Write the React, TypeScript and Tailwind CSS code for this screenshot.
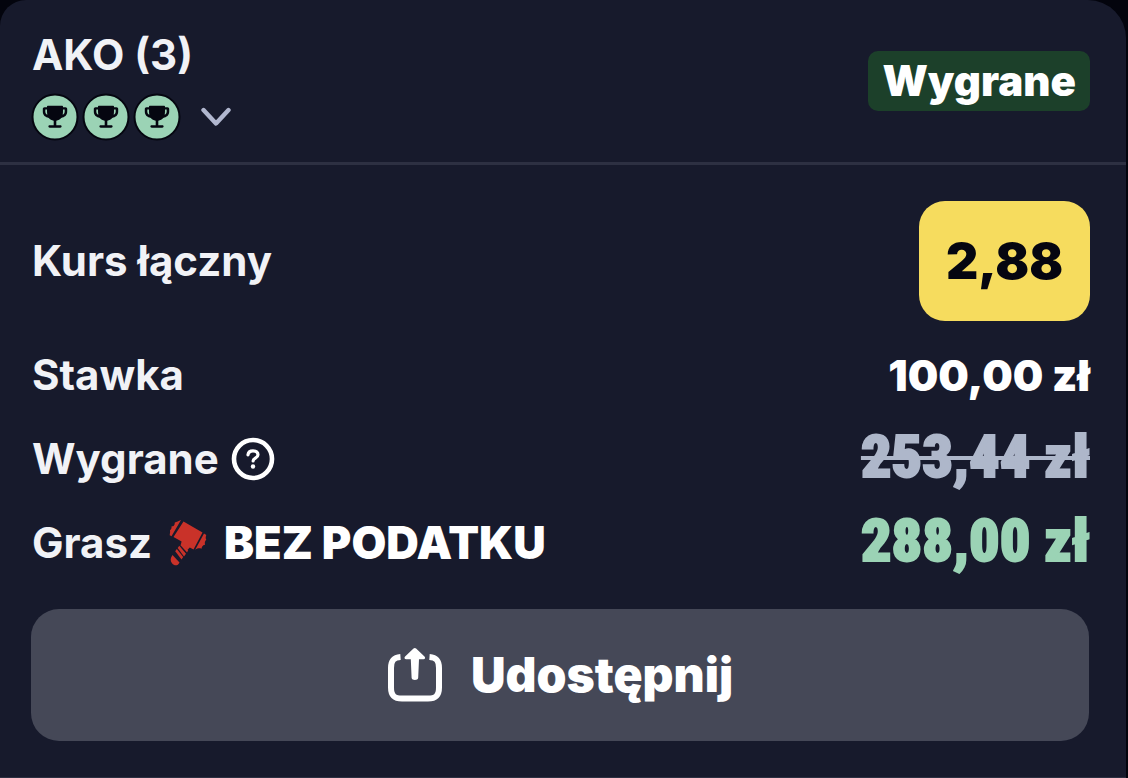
import type { ReactNode } from "react";

type RowProps = {
  label: ReactNode;
  children: ReactNode;
};

const legs = ["leg-1", "leg-2", "leg-3"];

const TrophyIcon = () => (
  <svg viewBox="0 0 48 48" className="size-12" aria-hidden="true">
    <circle cx="24" cy="24" r="22.5" fill="#9bd3b5" stroke="#050610" strokeWidth="2" />
    <path
      d="M16 13.5c0-.5.5-.8 1-.8h14c.5 0 1 .3 1 .8v.8h2.5c1 0 1.7.7 1.7 1.7v2.5c0 4-2.6 5.5-6 6.5-1.2 1.4-2.8 2.2-4.9 2.7v4.6h4c.8 0 1.3.5 1.3 1.2s-.5 1.2-1.3 1.2H18.700c-.8 0-1.3-.5-1.3-1.2s.5-1.2 1.3-1.2h4v-4.6c-2.1-.5-3.7-1.3-4.9-2.7-3.4-1-6-2.5-6-6.5V16c0-1 .7-1.7 1.7-1.7H16v-.8Zm0 3h-1.7v2c0 1.6.7 2.6 2 3.3-.3-1.500-.3-3.400-.3-5.300Zm16 0c0 1.900 0 3.800-.3 5.300 1.300-.7 2-1.700 2-3.300v-2H32Z"
      fill="#050610"
      fillRule="evenodd"
    />
  </svg>
);

const ChevronIcon = () => (
  <svg viewBox="0 0 30 20" className="h-5 w-[30px]" aria-hidden="true">
    <path
      d="M2.5 3 15 16.5 27.5 3"
      fill="none"
      stroke="#b1b7cf"
      strokeWidth="4.4"
      strokeLinecap="round"
      strokeLinejoin="round"
    />
  </svg>
);

const HelpIcon = () => (
  <svg viewBox="0 0 44 44" className="size-11" fill="none" aria-hidden="true">
    <circle cx="22" cy="22" r="19" stroke="#fff" strokeWidth="4.6" />
    <path
      d="M17 17.8c.3-2.6 2.3-4 5-4 2.9 0 5 1.5 5 3.9 0 3.5-4.9 3.4-4.9 6.3"
      stroke="#fff"
      strokeWidth="3.2"
      strokeLinecap="round"
    />
    <circle cx="22" cy="29.5" r="2.2" fill="#fff" />
  </svg>
);

const HammerIcon = () => (
  <svg viewBox="0 0 40 48" className="mx-1 h-12 w-10" fill="#c93229" aria-hidden="true">
    <path d="M15.5 2.5 34.5 13.5 25.5 30.5l-3.7-2-2 2-7-5 .8-3L5.5 18Z" />
    <path d="M13 1 3.5 17.3 1.7 16.2c.2-1.8.6-3.2.3-4.9 1.3-.8 1.6-1.8 1.6-4 2.2-.2 3-.8 3.2-3.9 2-.2 3.7-1.2 6.2-2.4Z" />
    <path d="m36 14.4 2.3 1.5c-.6 1.7-.9 3.2 0 4.9-1.4 1.2-1.8 2.8-1.2 5-2 .2-3.2 1.6-3.6 3.9-2.4-.7-3.9-.4-6.3 1Z" />
    <path d="m12.3 26 6.8 7.5 1.1-2.5-5.7-6.5Z" />
    <path d="M9.7 29 16 37.5l2-2.7-6.7-8Z" />
    <path d="M7.2 32.3 13.5 40.5l1.7-2.5-6.4-8Z" />
    <path d="M4.5 36 11.5 43.5c-1.6 3.5-5 3.8-7.5.8-2-2.5-1.7-5.2.5-8.3Z" />
  </svg>
);

const ShareIcon = () => (
  <svg viewBox="0 0 56 56" className="size-14" fill="none" aria-hidden="true">
    <path
      d="M13.5 10C6.5 10.5 4 13.5 4 21v19.5c0 8 3 11 11 11h26c8 0 11-3 11-11V21c0-7.5-2.5-10.5-9.5-11"
      stroke="#fff"
      strokeWidth="6"
    />
    <path
      d="M26.5 1.5c.8-.8 1.8-.8 2.6 0l8.4 8c1.2 1.3.6 2.7-1 2.7H32l-.8 18.5c-.1 3-6.5 3-6.6 0L23.8 12.2h-4.7c-1.6 0-2.2-1.4-1-2.7Z"
      fill="#fff"
    />
  </svg>
);

const Row = ({ label, children }: RowProps) => (
  <div className="flex h-[84px] items-center justify-between">
    <dt className="flex items-center gap-3">{label}</dt>
    <dd>{children}</dd>
  </div>
);

const App = () => {
  return (
    <main className="min-h-screen bg-[#03040d] pr-0.5 font-['Inter',sans-serif] text-[42px] leading-[48px] font-bold text-[#f1f2f6]">
      <section className="rounded-tl-[26px] rounded-tr-[38px] border-b border-[#2d3042] bg-[#171a2c]">
        <header className="flex items-start justify-between border-b-3 border-[#2d3042] pt-[31px] pr-9 pb-[21px] pl-8">
          <div>
            <h1>AKO (3)</h1>
            <button type="button" aria-label="Pokaż zakłady" className="mt-3.5 -ml-px flex items-center gap-5">
              <span className="flex gap-[3px]">
                {legs.map((leg) => (
                  <TrophyIcon key={leg} />
                ))}
              </span>
              <ChevronIcon />
            </button>
          </div>
          <span className="mt-5 rounded-[10px] bg-[#1c402a] px-3.5 py-1.5 font-black text-white">Wygrane</span>
        </header>

        <div className="pt-9 pr-9 pb-9 pl-8">
          <dl>
            <div className="mb-3 flex items-center justify-between">
              <dt>Kurs łączny</dt>
              <dd className="flex h-30 w-[171px] items-center justify-center rounded-[26px] bg-[#f6dc5e] text-[50px] font-black text-[#050610]">
                2,88
              </dd>
            </div>
            <Row label="Stawka">
              <span className="text-[43px] font-black text-white">100,00 zł</span>
            </Row>
            <Row
              label={
                <>
                  Wygrane
                  <button type="button" aria-label="Informacja o wygranej">
                    <HelpIcon />
                  </button>
                </>
              }
            >
              <s className="font-['Roboto_Condensed','Liberation_Sans_Narrow',Roboto,sans-serif] text-[60px] font-black text-[#aeb7ca] decoration-4 [-webkit-text-stroke:2px_#aeb7ca]">
                253,44 zł
              </s>
            </Row>
            <Row
              label={
                <>
                  Grasz
                  <HammerIcon />
                  <strong className="text-[45px] font-black text-white">BEZ PODATKU</strong>
                </>
              }
            >
              <span className="font-['Roboto_Condensed','Liberation_Sans_Narrow',Roboto,sans-serif] text-[60px] font-black text-[#9bd3b5] [-webkit-text-stroke:2px_#9bd3b5]">
                288,00 zł
              </span>
            </Row>
          </dl>
          <button
            type="button"
            className="mt-6 -ml-px flex h-[132px] w-full items-center justify-center gap-7 rounded-[28px] bg-[#454857] text-[48px] font-black text-white"
          >
            <ShareIcon />
            Udostępnij
          </button>
        </div>
      </section>
    </main>
  );
};

export default App;
